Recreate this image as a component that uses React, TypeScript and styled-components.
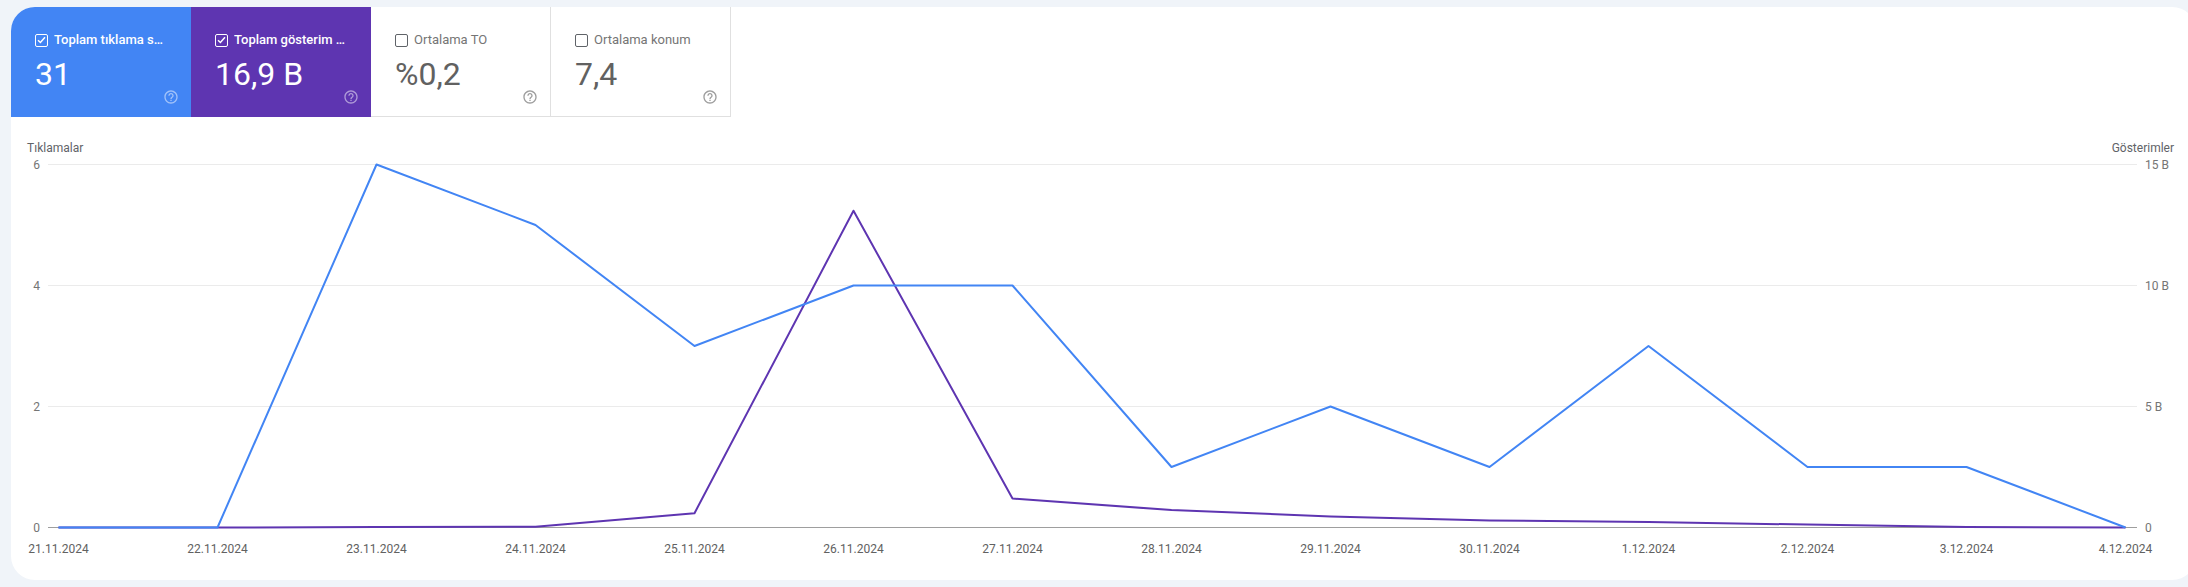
import styled, { createGlobalStyle } from 'styled-components';

const GlobalStyle = createGlobalStyle`
  html, body {
    margin: 0;
    padding: 0;
    background-color: #f0f4f9;
    overflow: hidden;
  }
  body {
    font-family: Roboto, "Noto Sans", Arial, sans-serif;
  }
`;

const Page = styled.div`
  padding: 7px 0 0 11px;
  box-sizing: border-box;
  height: 100vh;
`;

const Card = styled.div`
  display: flex;
  flex-direction: column;
  width: 2185px;
  height: 573px;
  background-color: #ffffff;
  border-radius: 24px;
  overflow: hidden;
`;

const MetricRow = styled.div`
  display: flex;
  height: 110px;
  flex-shrink: 0;
`;

type Tone = 'blue' | 'purple' | 'none';

const toneBg: Record<Tone, string> = {
  blue: '#4285f4',
  purple: '#5e35b1',
  none: '#ffffff',
};

const MetricCard = styled.div<{ $tone: Tone }>`
  display: flex;
  flex-direction: column;
  width: 180px;
  height: 110px;
  box-sizing: border-box;
  padding: 25px 12px 12px 24px;
  background-color: ${(p) => toneBg[p.$tone]};
  color: ${(p) => (p.$tone === 'none' ? '#5f6368' : '#ffffff')};
  border-right: ${(p) => (p.$tone === 'none' ? '1px solid #e0e0e0' : 'none')};
  border-bottom: ${(p) => (p.$tone === 'none' ? '1px solid #e0e0e0' : 'none')};
`;

const LabelRow = styled.div`
  display: flex;
  align-items: center;
  gap: 6px;
  height: 16px;
  padding-right: 12px;
`;

const CheckBox = styled.span<{ $checked: boolean }>`
  display: flex;
  align-items: center;
  justify-content: center;
  flex-shrink: 0;
  width: 13px;
  height: 13px;
  box-sizing: border-box;
  border: 1.5px solid ${(p) => (p.$checked ? '#ffffff' : '#5f6368')};
  border-radius: 2px;
`;

const LabelText = styled.span<{ $checked: boolean }>`
  font-size: 13px;
  font-weight: ${(p) => (p.$checked ? 500 : 400)};
  color: ${(p) => (p.$checked ? '#ffffff' : '#757575')};
  white-space: nowrap;
  overflow: hidden;
  text-overflow: ellipsis;
  line-height: 16px;
`;

const Value = styled.div<{ $checked: boolean }>`
  margin-top: 11px;
  font-size: 32px;
  line-height: 30px;
  font-weight: 400;
  color: ${(p) => (p.$checked ? '#ffffff' : '#616161')};
`;

const Footer = styled.div`
  display: flex;
  justify-content: flex-end;
  margin-top: auto;
`;

const HelpSvg = styled.svg<{ $checked: boolean }>`
  width: 16px;
  height: 16px;
  fill: ${(p) => (p.$checked ? 'rgba(255, 255, 255, 0.5)' : '#9e9e9e')};
`;

const ChartWrap = styled.div`
  flex: 1;
  display: flex;
`;

const ChartSvg = styled.svg`
  display: block;
`;

const AxisTitle = styled.text`
  font-family: Roboto, Arial, sans-serif;
  font-size: 12px;
  fill: #5f6368;
`;

const TickLabel = styled.text`
  font-family: Roboto, Arial, sans-serif;
  font-size: 12px;
  fill: #757575;
`;

const DateLabel = styled.text`
  font-family: Roboto, Arial, sans-serif;
  font-size: 12px;
  fill: #616161;
`;

const metrics = [
  { label: 'Toplam tıklama sayısı', value: '31', tone: 'blue' as Tone },
  { label: 'Toplam gösterim sayısı', value: '16,9 B', tone: 'purple' as Tone },
  { label: 'Ortalama TO', value: '%0,2', tone: 'none' as Tone },
  { label: 'Ortalama konum', value: '7,4', tone: 'none' as Tone },
];

const days = [
  '21.11.2024',
  '22.11.2024',
  '23.11.2024',
  '24.11.2024',
  '25.11.2024',
  '26.11.2024',
  '27.11.2024',
  '28.11.2024',
  '29.11.2024',
  '30.11.2024',
  '1.12.2024',
  '2.12.2024',
  '3.12.2024',
  '4.12.2024',
];

const clicks = [0, 0, 6, 5, 3, 4, 4, 1, 2, 1, 3, 1, 1, 0];
// impressions, in billions
const impressions = [0, 0, 0.02, 0.03, 0.59, 13.09, 1.2, 0.72, 0.46, 0.29, 0.23, 0.12, 0.02, 0];

const X0 = 47.5;
const STEP = 159;
const Y0 = 410.5;
const RANGE = 363;
const GRID_L = 37;
const GRID_R = 2126;

const xAt = (i: number) => X0 + i * STEP;
const yClicks = (v: number) => Y0 - (v / 6) * RANGE;
const yImpr = (v: number) => Y0 - (v / 15) * RANGE;

const toPoints = (vals: number[], y: (v: number) => number) =>
  vals.map((v, i) => `${xAt(i)},${y(v).toFixed(1)}`).join(' ');

const HELP_PATH =
  'M11 18h2v-2h-2v2zm1-16C6.48 2 2 6.48 2 12s4.48 10 10 10 10-4.48 10-10S17.52 2 12 2zm0 18c-4.41 0-8-3.59-8-8s3.59-8 8-8 8 3.59 8 8-3.59 8-8 8zm0-14c-2.21 0-4 1.79-4 4h2c0-1.1.9-2 2-2s2 .9 2 2c0 2-3 1.75-3 5h2c0-2.25 3-2.5 3-5 0-2.21-1.79-4-4-4z';

function Chart() {
  const ticks = [
    { left: '6', right: '15 B', v: 6 },
    { left: '4', right: '10 B', v: 4 },
    { left: '2', right: '5 B', v: 2 },
  ];

  return (
    <ChartSvg width={2185} height={463} viewBox="0 0 2185 463">
      <AxisTitle x={16} y={35}>Tıklamalar</AxisTitle>
      <AxisTitle x={2163} y={35} textAnchor="end">Gösterimler</AxisTitle>

      {ticks.map((t) => {
        const y = yClicks(t.v);
        return (
          <g key={t.v}>
            <line x1={GRID_L} x2={GRID_R} y1={y} y2={y} stroke="#ebebeb" strokeWidth={1} />
            <TickLabel x={29} y={y + 4} textAnchor="end">{t.left}</TickLabel>
            <TickLabel x={2134} y={y + 4}>{t.right}</TickLabel>
          </g>
        );
      })}

      <line x1={GRID_L} x2={GRID_R} y1={Y0} y2={Y0} stroke="#9e9e9e" strokeWidth={1} />
      <TickLabel x={29} y={Y0 + 4} textAnchor="end">0</TickLabel>
      <TickLabel x={2134} y={Y0 + 4}>0</TickLabel>

      {days.map((d, i) => (
        <DateLabel key={d} x={xAt(i)} y={436} textAnchor="middle">{d}</DateLabel>
      ))}

      <polyline
        points={toPoints(impressions, yImpr)}
        fill="none"
        stroke="#5e35b1"
        strokeWidth={2}
        strokeLinejoin="round"
      />
      <polyline
        points={toPoints(clicks, yClicks)}
        fill="none"
        stroke="#4285f4"
        strokeWidth={2}
        strokeLinejoin="round"
      />
    </ChartSvg>
  );
}

function App() {
  return (
    <>
      <GlobalStyle />
      <Page>
        <Card>
          <MetricRow>
            {metrics.map((m) => {
              const checked = m.tone !== 'none';
              return (
                <MetricCard key={m.label} $tone={m.tone}>
                  <LabelRow>
                    <CheckBox $checked={checked}>
                      {checked && (
                        <svg width="9" height="8" viewBox="0 0 9 8">
                          <path d="M1 4.2 L3.4 6.5 L8 1.3" fill="none" stroke="#ffffff" strokeWidth="1.5" />
                        </svg>
                      )}
                    </CheckBox>
                    <LabelText $checked={checked}>{m.label}</LabelText>
                  </LabelRow>
                  <Value $checked={checked}>{m.value}</Value>
                  <Footer>
                    <HelpSvg $checked={checked} viewBox="0 0 24 24">
                      <path d={HELP_PATH} />
                    </HelpSvg>
                  </Footer>
                </MetricCard>
              );
            })}
          </MetricRow>
          <ChartWrap>
            <Chart />
          </ChartWrap>
        </Card>
      </Page>
    </>
  );
}

export default App;
